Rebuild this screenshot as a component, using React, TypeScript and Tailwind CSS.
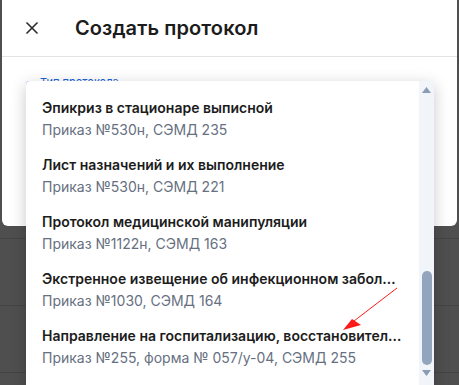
import { X } from "lucide-react";

interface Protocol {
  title: string
  order: string
}

const PROTOCOLS: Protocol[] = [
  { title: "Эпикриз в стационаре выписной", order: "Приказ №530н, СЭМД 235" },
  { title: "Лист назначений и их выполнение", order: "Приказ №530н, СЭМД 221" },
  { title: "Протокол медицинской манипуляции", order: "Приказ №1122н, СЭМД 163" },
  { title: "Экстренное извещение об инфекционном заболевании", order: "Приказ №1030, СЭМД 164" },
  { title: "Направление на госпитализацию, восстановительное лечение, обследование", order: "Приказ №255, форма № 057/у-04, СЭМД 255" },
]

const App = () => {

  return (
    <div className="relative w-[459px] h-[385px] overflow-hidden bg-[#4f4f4f] font-['Inter','Noto_Sans',sans-serif]">

      {/* dialog */}
      <div className="ml-[2px] w-[455px] h-[226px] bg-white rounded-b-[6px]">

        <div className="h-[57px] flex items-center border-b border-[#e3e3e3]">
          <button className="w-[60px] flex justify-center text-[#2b2b2b]">
            <X size={20} strokeWidth={2} />
          </button>
          <h1 className="ml-[13px] text-[20px] font-semibold text-[#1c1c1c] tracking-[0.1px]">
            Создать протокол
          </h1>
        </div>

        <div className="relative mx-[24px] mt-[24px] h-[46px] rounded-[4px] border-2 border-[#1a66d6]">
          <span className="absolute left-[9px] -top-[8px] px-[3px] bg-white text-[11px] leading-[14px] text-[#1a66d6]">
            Тип протокола
          </span>
        </div>

      </div>

      {/* table rows behind the overlay */}
      <div className="flex flex-col">
        <div className="h-[13px] border-b border-[#444]" />
        <div className="h-[67px] border-b border-[#444]" />
        <div className="h-[67px] border-b border-[#444]" />
      </div>

      {/* dropdown menu */}
      <div className="absolute left-[26px] top-[81px] w-[408px] h-[312px] flex bg-white rounded-[4px] shadow-[0_4px_16px_rgba(0,0,0,0.22)]">

        <ul className="flex-1 min-w-0 pt-[9px]">
          {PROTOCOLS.map(p => (
            <li key={p.order} className="h-[57px] px-[16px] flex flex-col justify-center">
              <p className="truncate text-[14px] leading-[20px] font-semibold text-[#1c1c1c]">
                {p.title}
              </p>
              <p className="mt-[2px] truncate text-[14px] leading-[20px] text-[#66707f]">
                {p.order}
              </p>
            </li>
          ))}
        </ul>

        <div className="w-[15px] flex flex-col items-center bg-[#f1f4f9]">
          <svg width="9" height="6" viewBox="0 0 9 6" className="mt-[6px]">
            <path d="M4.5 0 L9 6 L0 6 Z" fill="#8a9bb4" />
          </svg>
          <div className="mt-[178px] w-[10px] h-[94px] rounded-full bg-[#93a5be]" />
          <svg width="9" height="6" viewBox="0 0 9 6" className="mt-[5px]">
            <path d="M0 0 L9 0 L4.5 6 Z" fill="#8a9bb4" />
          </svg>
        </div>

      </div>

      {/* red annotation arrow */}
      <svg className="absolute left-0 top-0 pointer-events-none" width="459" height="385">
        <line x1="397" y1="288" x2="354" y2="321" stroke="#ff1a1a" strokeWidth="1" />
        <path d="M343 330 L352 319 L361 325 Z" fill="#ff1a1a" />
      </svg>

    </div>
  )

}

export default App
